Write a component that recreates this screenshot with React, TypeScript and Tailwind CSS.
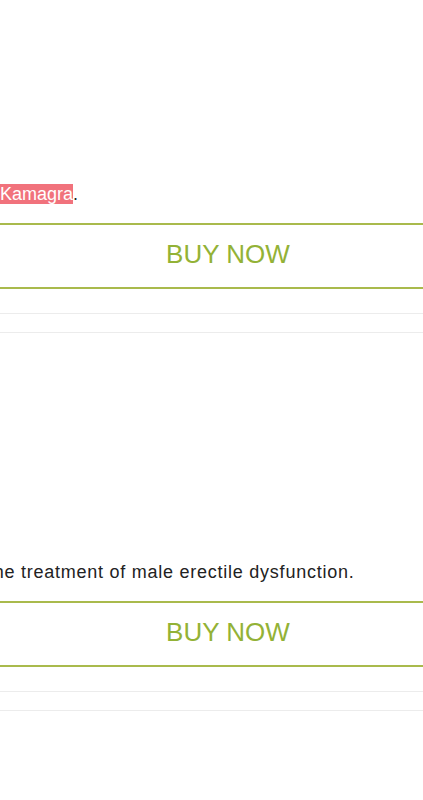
import React from "react";

type Offer = {
  lead: React.ReactNode;
  gapAbove: string;
};

function BuyButton() {
  return (
    <a
      href="#"
      className="flex h-[66px] items-center justify-center border-y-2 border-[#a9ba4c] pb-1 pl-[33px] text-[26px] leading-none text-[#93b236] no-underline"
    >
      BUY NOW
    </a>
  );
}

function Rules() {
  return (
    <>
      <div className="mt-[24px] h-px bg-[#ececec]" />
      <div className="mt-[18px] h-px bg-[#ececec]" />
    </>
  );
}

export default function App() {
  const offers: Offer[] = [
    {
      gapAbove: "mt-[182px]",
      lead: (
        <>
          <span className="bg-[#f1727c] text-white">Kamagra</span>.
        </>
      ),
    },
    {
      gapAbove: "mt-[227px]",
      lead: (
        <span className="-ml-[12px] tracking-[0.75px]">
          the treatment of male erectile dysfunction.
        </span>
      ),
    },
  ];

  return (
    <div
      className="min-h-[800px] w-[423px] overflow-hidden bg-white text-[18px] text-[#222]"
      style={{ fontFamily: '"Liberation Sans", Arial, sans-serif' }}
    >
      {offers.map((offer, i) => (
        <section key={i} className={offer.gapAbove}>
          <p className="h-6 whitespace-nowrap leading-6">{offer.lead}</p>
          <div className="mt-[17px]">
            <BuyButton />
          </div>
          <Rules />
        </section>
      ))}
    </div>
  );
}
